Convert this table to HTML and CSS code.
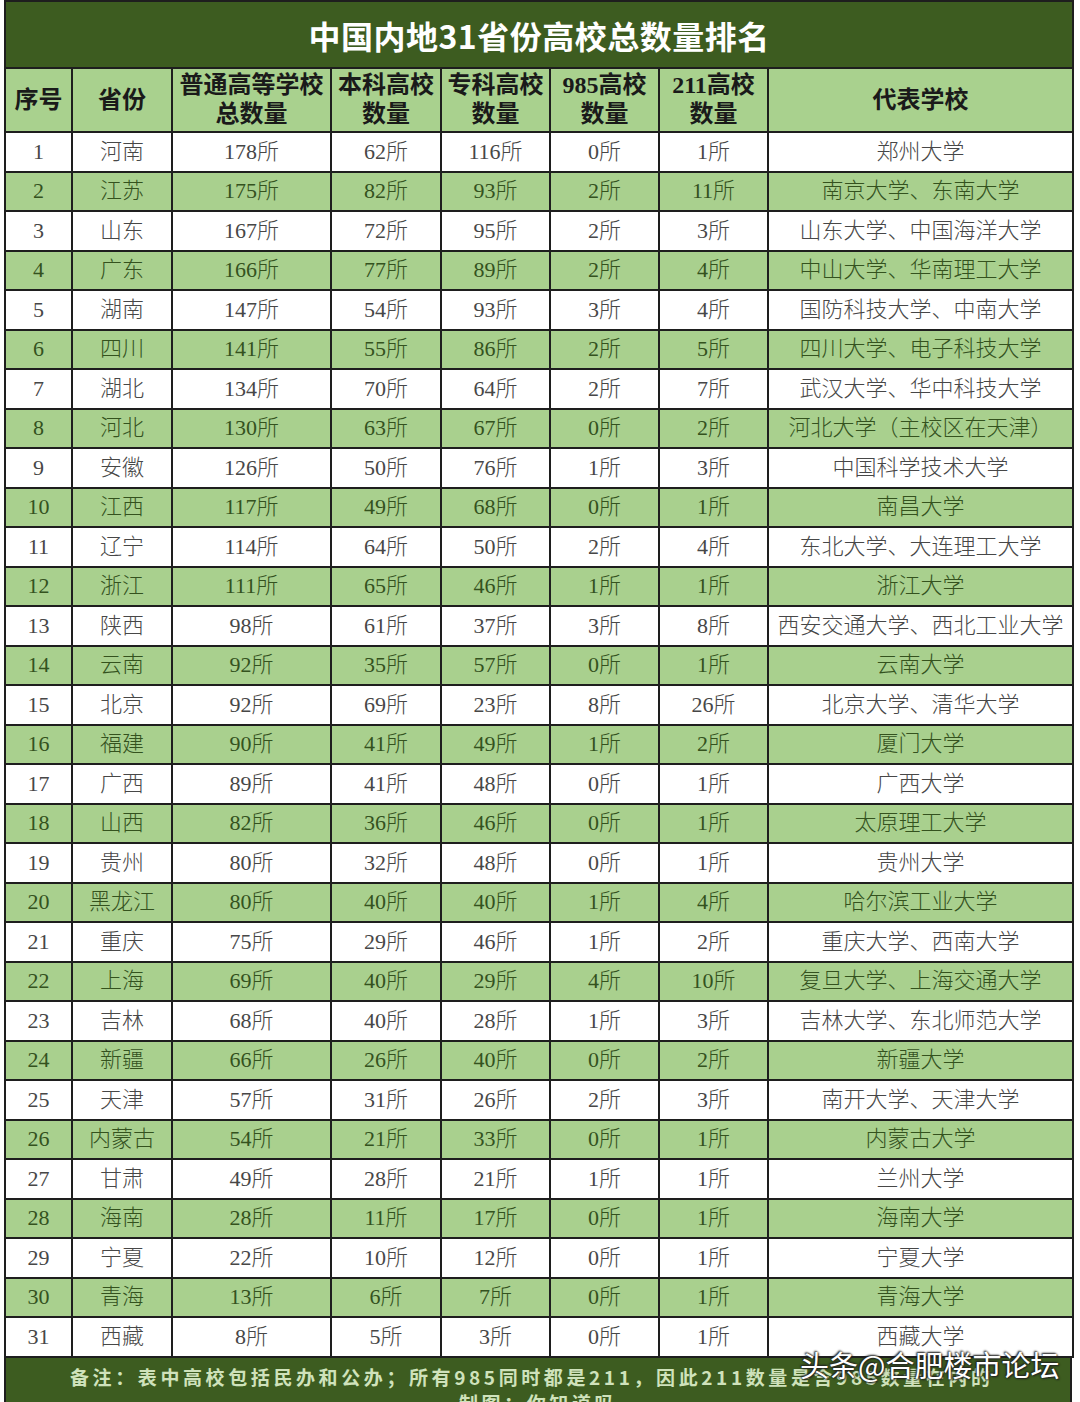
FILE: index.html
```html
<!DOCTYPE html>
<html lang="zh-CN">
<head>
<meta charset="utf-8">
<title>中国内地31省份高校总数量排名</title>
<link rel="stylesheet" href="styles.css">
</head>
<body>
<div class="sheet">
  <table class="rank">
    <colgroup>
      <col class="c1"><col class="c2"><col class="c3"><col class="c4"><col class="c5"><col class="c6"><col class="c7"><col class="c8">
    </colgroup>
    <thead>
      <tr class="title-row"><th colspan="8" class="title">中国内地31省份高校总数量排名</th></tr>
      <tr class="head-row">
        <th>序号</th><th>省份</th><th>普通高等学校<br>总数量</th><th>本科高校<br>数量</th><th>专科高校<br>数量</th><th>985高校<br>数量</th><th>211高校<br>数量</th><th>代表学校</th>
      </tr>
    </thead>
    <tbody>
      <tr><td>1</td><td>河南</td><td>178所</td><td>62所</td><td>116所</td><td>0所</td><td>1所</td><td>郑州大学</td></tr>
      <tr><td>2</td><td>江苏</td><td>175所</td><td>82所</td><td>93所</td><td>2所</td><td>11所</td><td>南京大学、东南大学</td></tr>
      <tr><td>3</td><td>山东</td><td>167所</td><td>72所</td><td>95所</td><td>2所</td><td>3所</td><td>山东大学、中国海洋大学</td></tr>
      <tr><td>4</td><td>广东</td><td>166所</td><td>77所</td><td>89所</td><td>2所</td><td>4所</td><td>中山大学、华南理工大学</td></tr>
      <tr><td>5</td><td>湖南</td><td>147所</td><td>54所</td><td>93所</td><td>3所</td><td>4所</td><td>国防科技大学、中南大学</td></tr>
      <tr><td>6</td><td>四川</td><td>141所</td><td>55所</td><td>86所</td><td>2所</td><td>5所</td><td>四川大学、电子科技大学</td></tr>
      <tr><td>7</td><td>湖北</td><td>134所</td><td>70所</td><td>64所</td><td>2所</td><td>7所</td><td>武汉大学、华中科技大学</td></tr>
      <tr><td>8</td><td>河北</td><td>130所</td><td>63所</td><td>67所</td><td>0所</td><td>2所</td><td>河北大学（主校区在天津）</td></tr>
      <tr><td>9</td><td>安徽</td><td>126所</td><td>50所</td><td>76所</td><td>1所</td><td>3所</td><td>中国科学技术大学</td></tr>
      <tr><td>10</td><td>江西</td><td>117所</td><td>49所</td><td>68所</td><td>0所</td><td>1所</td><td>南昌大学</td></tr>
      <tr><td>11</td><td>辽宁</td><td>114所</td><td>64所</td><td>50所</td><td>2所</td><td>4所</td><td>东北大学、大连理工大学</td></tr>
      <tr><td>12</td><td>浙江</td><td>111所</td><td>65所</td><td>46所</td><td>1所</td><td>1所</td><td>浙江大学</td></tr>
      <tr><td>13</td><td>陕西</td><td>98所</td><td>61所</td><td>37所</td><td>3所</td><td>8所</td><td>西安交通大学、西北工业大学</td></tr>
      <tr><td>14</td><td>云南</td><td>92所</td><td>35所</td><td>57所</td><td>0所</td><td>1所</td><td>云南大学</td></tr>
      <tr><td>15</td><td>北京</td><td>92所</td><td>69所</td><td>23所</td><td>8所</td><td>26所</td><td>北京大学、清华大学</td></tr>
      <tr><td>16</td><td>福建</td><td>90所</td><td>41所</td><td>49所</td><td>1所</td><td>2所</td><td>厦门大学</td></tr>
      <tr><td>17</td><td>广西</td><td>89所</td><td>41所</td><td>48所</td><td>0所</td><td>1所</td><td>广西大学</td></tr>
      <tr><td>18</td><td>山西</td><td>82所</td><td>36所</td><td>46所</td><td>0所</td><td>1所</td><td>太原理工大学</td></tr>
      <tr><td>19</td><td>贵州</td><td>80所</td><td>32所</td><td>48所</td><td>0所</td><td>1所</td><td>贵州大学</td></tr>
      <tr><td>20</td><td>黑龙江</td><td>80所</td><td>40所</td><td>40所</td><td>1所</td><td>4所</td><td>哈尔滨工业大学</td></tr>
      <tr><td>21</td><td>重庆</td><td>75所</td><td>29所</td><td>46所</td><td>1所</td><td>2所</td><td>重庆大学、西南大学</td></tr>
      <tr><td>22</td><td>上海</td><td>69所</td><td>40所</td><td>29所</td><td>4所</td><td>10所</td><td>复旦大学、上海交通大学</td></tr>
      <tr><td>23</td><td>吉林</td><td>68所</td><td>40所</td><td>28所</td><td>1所</td><td>3所</td><td>吉林大学、东北师范大学</td></tr>
      <tr><td>24</td><td>新疆</td><td>66所</td><td>26所</td><td>40所</td><td>0所</td><td>2所</td><td>新疆大学</td></tr>
      <tr><td>25</td><td>天津</td><td>57所</td><td>31所</td><td>26所</td><td>2所</td><td>3所</td><td>南开大学、天津大学</td></tr>
      <tr><td>26</td><td>内蒙古</td><td>54所</td><td>21所</td><td>33所</td><td>0所</td><td>1所</td><td>内蒙古大学</td></tr>
      <tr><td>27</td><td>甘肃</td><td>49所</td><td>28所</td><td>21所</td><td>1所</td><td>1所</td><td>兰州大学</td></tr>
      <tr><td>28</td><td>海南</td><td>28所</td><td>11所</td><td>17所</td><td>0所</td><td>1所</td><td>海南大学</td></tr>
      <tr><td>29</td><td>宁夏</td><td>22所</td><td>10所</td><td>12所</td><td>0所</td><td>1所</td><td>宁夏大学</td></tr>
      <tr><td>30</td><td>青海</td><td>13所</td><td>6所</td><td>7所</td><td>0所</td><td>1所</td><td>青海大学</td></tr>
      <tr><td>31</td><td>西藏</td><td>8所</td><td>5所</td><td>3所</td><td>0所</td><td>1所</td><td>西藏大学</td></tr>
    </tbody>
  </table>
  <div class="footer">
    <p class="note">备注：表中高校包括民办和公办；所有985同时都是211，因此211数量是含985数量在内的</p>
    <p class="credit">制图：你知道吗</p>
    <div class="watermark">头条@合肥楼市论坛</div>
  </div>
</div>
</body>
</html>
```

FILE: styles.css
```css
html, body {
  margin: 0;
  padding: 0;
  background: #ffffff;
}
body {
  width: 1080px;
  height: 1402px;
  overflow: hidden;
}
.sheet {
  position: relative;
  width: 1068px;
  margin-left: 4px;
}
.rank {
  width: 1068px;
  border-collapse: collapse;
  table-layout: fixed;
  font-family: "Liberation Serif", "Noto Sans CJK SC", serif;
}
.c1 { width: 67px; }
.c2 { width: 100px; }
.c3 { width: 159px; }
.c4 { width: 110px; }
.c5 { width: 109px; }
.c6 { width: 109px; }
.c7 { width: 109px; }
.c8 { width: 305px; }

.rank th, .rank td {
  border: 2px solid #1e1e1e;
  padding: 0;
  text-align: center;
  vertical-align: middle;
}
.title-row { height: 67px; }
.title {
  background: #3d5c20;
  color: #ffffff;
  font-family: "Noto Sans CJK SC", "Noto Sans", sans-serif;
  font-weight: 700;
  font-size: 32px;
  letter-spacing: 0.5px;
  border-top: none;
}
.head-row { height: 64px; }
.head-row th {
  background: #a9d18e;
  color: #1a1a1a;
  font-size: 24px;
  font-weight: 700;
  line-height: 29px;
}
.rank tbody tr { height: 39.5px; }
.rank td {
  font-size: 22px;
  font-weight: 300;
  line-height: 26px;
  color: #474747;
  background: #ffffff;
}
.rank tbody tr:nth-child(even) td {
  background: #a9d08e;
  color: #34521e;
}
.footer {
  background: #3d5c20;
  height: 60px;
  border-left: 2px solid #1e1e1e;
  border-right: 2px solid #1e1e1e;
  box-sizing: border-box;
  color: #cfe2bb;
  font-family: "Noto Sans CJK SC", "Liberation Sans", sans-serif;
  font-weight: 700;
  font-size: 19px;
  letter-spacing: 3.6px;
  overflow: hidden;
}
.note {
  margin: 0;
  padding: 6px 0 0 64px;
  line-height: 26px;
  white-space: nowrap;
}
.credit {
  margin: 0;
  line-height: 26px;
  text-align: center;
}
.watermark {
  position: absolute;
  left: 796px;
  top: 1343px;
  font-family: "Noto Sans CJK SC", sans-serif;
  font-size: 29px;
  font-weight: 400;
  letter-spacing: 0;
  color: #ffffff;
  text-shadow: 0 0 2px #222, 1px 1px 2px #222, -1px -1px 2px #222;
}
```
